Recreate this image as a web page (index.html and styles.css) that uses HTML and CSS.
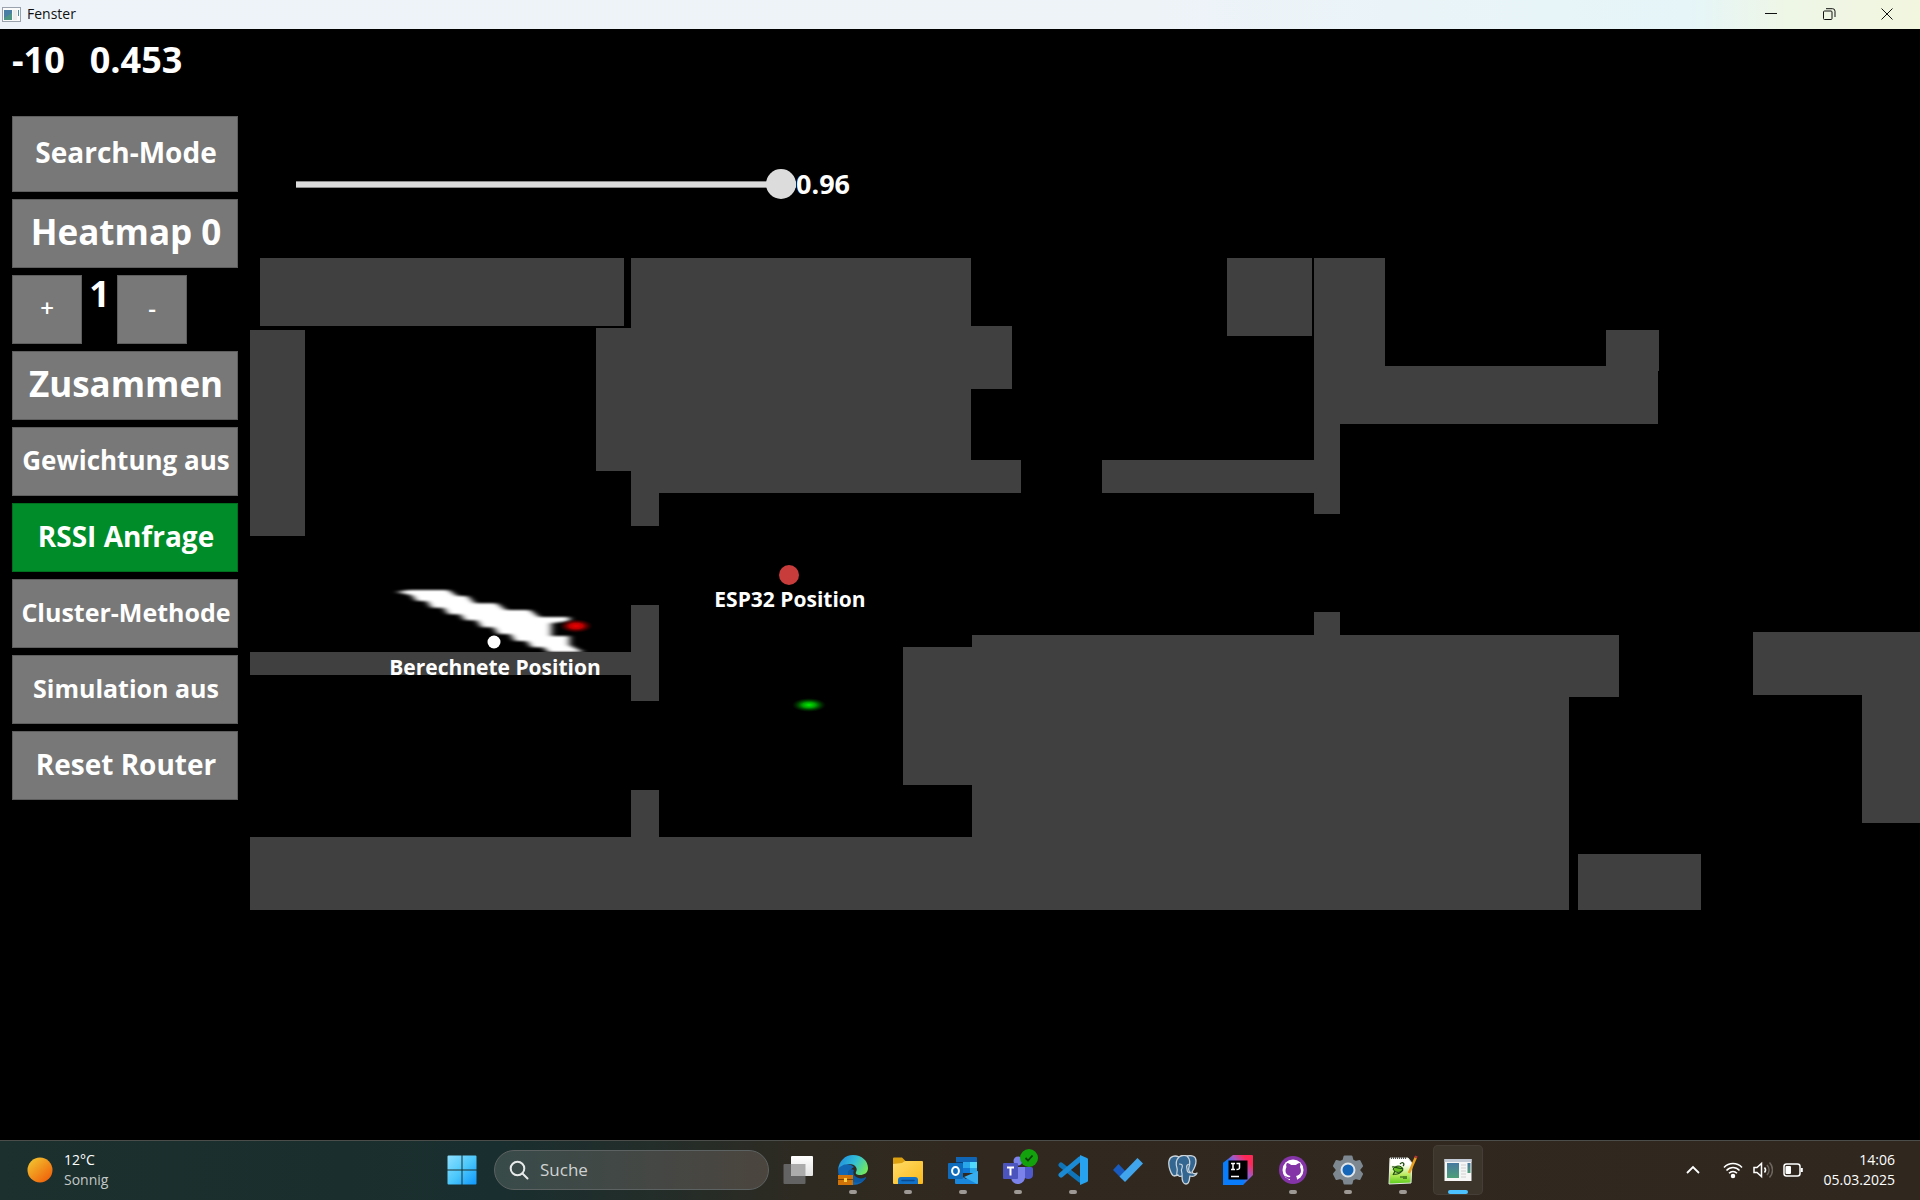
FILE: index.html
```html
<!DOCTYPE html>
<html lang="de">
<head>
<meta charset="utf-8">
<title>Fenster</title>
<link rel="stylesheet" href="styles.css">
</head>
<body>
<header class="titlebar">
  <svg class="titlebar-icon" viewBox="0 0 19 15" aria-hidden="true">
    <rect x=".5" y=".5" width="18" height="14" fill="#fafafa" stroke="#9aa3ad"/>
    <rect x="2" y="3" width="8" height="10" fill="#4d9484"/>
    <path d="M2 3h8v3l-8 5z" fill="#4a7fa5"/>
    <rect x="11" y="3" width="4" height="10" fill="#ececec"/>
    <rect x="16" y="3" width="1" height="6" fill="#4a90a8"/>
  </svg>
  <span class="titlebar-name">Fenster</span>
  <div class="titlebar-controls">
    <button type="button" aria-label="Minimieren"><svg viewBox="0 0 14 14"><path d="M1 6.500h12"/></svg></button>
    <button type="button" aria-label="Verkleinern"><svg viewBox="0 0 14 14"><rect x="1.500" y="4" width="8.500" height="8.500" rx="1"/><path d="M4 1.700h6.500a2.500 2.500 0 0 1 2.500 2.500V10"/></svg></button>
    <button type="button" aria-label="Schließen"><svg viewBox="0 0 14 14"><path d="M1.500 1.500l11 11M12.500 1.500l-11 11"/></svg></button>
  </div>
</header>

<main class="window">
  <aside class="sidebar">
    <div class="readout"><span>-10</span><span>0.453</span></div>
    <div class="controls">
      <button type="button" class="control control-tall size-m">Search-Mode</button>
      <button type="button" class="control size-l">Heatmap 0</button>
      <div class="stepper">
        <button type="button" class="control size-step">+</button>
        <output class="stepper-value">1</output>
        <button type="button" class="control size-step">-</button>
      </div>
      <button type="button" class="control size-l">Zusammen</button>
      <button type="button" class="control size-s">Gewichtung aus</button>
      <button type="button" class="control control-on size-m">RSSI Anfrage</button>
      <button type="button" class="control size-xs">Cluster-Methode</button>
      <button type="button" class="control size-xs">Simulation aus</button>
      <button type="button" class="control size-m">Reset Router</button>
    </div>
  </aside>

  <section class="stage">
    <div class="slider">
      <input type="range" id="factor" min="0" max="0.96" step="0.01" value="0.96" aria-label="Faktor">
      <output for="factor">0.96</output>
    </div>
    <svg class="map" viewBox="250 257 1670 654" role="img" aria-label="Grundriss">
      <defs>
        <filter id="soft" x="-10%" y="-20%" width="120%" height="140%"><feGaussianBlur stdDeviation="11 3"/></filter>
        <radialGradient id="glow-red"><stop offset="0" stop-color="#f00000"/><stop offset=".4" stop-color="#b80000"/><stop offset="1" stop-color="#500000" stop-opacity="0"/></radialGradient>
        <radialGradient id="glow-green"><stop offset="0" stop-color="#00f000"/><stop offset=".4" stop-color="#009800"/><stop offset="1" stop-color="#004000" stop-opacity="0"/></radialGradient>
      </defs>
      <g transform="translate(380 560) scale(.3333)">
        <path filter="url(#soft)" fill="#fff" d="M50 96L85 90H205L232 108H262L285 130H350L378 150H450L478 171H568V183L514 190V228H568V255L610 276H505L490 262H455L440 243H405L390 222H355L340 202H305L290 181H255L240 163H205L190 143H155L140 123H110L95 106Z"/>
      </g>
      <ellipse cx="576" cy="626" rx="17" ry="7" fill="url(#glow-red)"/>
      <ellipse cx="809" cy="705" rx="17" ry="7" fill="url(#glow-green)"/>
      <g class="walls">
        <path d="M260 258H624V326H260Z"/>
        <path d="M250 330H305V536H250Z"/>
        <path d="M631 258H971V326H1012V389H971V460H1021V493H659V526H631V471H596V328H631Z"/>
        <path d="M1227 258H1312V336H1227Z"/>
        <path d="M1314 258H1385V366H1606V330H1659V371H1658V424H1340V514H1314V493H1102V460H1314Z"/>
        <path d="M250 652H631V605H659V701H631V675H250Z"/>
        <path d="M250 837H631V790H659V837H972V785H903V647H972V635H1314V612H1340V635H1619V697H1569V910H250Z"/>
        <path d="M1578 854H1701V910H1578Z"/>
        <path d="M1753 632H1920V823H1862V695H1753Z"/>
      </g>
      <circle cx="494" cy="642" r="6.500" fill="#fff"/>
      <circle cx="789" cy="575" r="10" fill="#c83c3c"/>
      <text class="map-label" x="495" y="675">Berechnete Position</text>
      <text class="map-label" x="790" y="607">ESP32 Position</text>
    </svg>
  </section>
</main>

<footer class="taskbar">
  <button type="button" class="weather">
    <svg viewBox="0 0 26 26" aria-hidden="true"><defs><linearGradient id="sun" x1=".1" y1=".1" x2=".8" y2=".9"><stop stop-color="#f2c12e"/><stop offset="1" stop-color="#f0660c"/></linearGradient></defs><circle cx="13" cy="13" r="12.500" fill="url(#sun)"/></svg>
    <span class="two-lines"><span>12°C</span><span class="dim">Sonnig</span></span>
  </button>

  <nav class="dock">
    <button type="button" class="app" aria-label="Start">
      <svg viewBox="0 0 30 30"><defs><linearGradient id="win" x1="0" y1="0" x2="1" y2="1"><stop stop-color="#8fe0ff"/><stop offset=".5" stop-color="#4cc8fb"/><stop offset="1" stop-color="#0f97fb"/></linearGradient></defs><path fill="url(#win)" d="M1.500 .5H14.500V14.500H.5V1.500a1 1 0 0 1 1-1zM15.500 .5H28.500a1 1 0 0 1 1 1V14.500H15.500zM.5 15.500H14.500V29.500H1.500a1 1 0 0 1-1-1zM15.500 15.500H29.500V28.500a1 1 0 0 1-1 1H15.500z"/></svg>
    </button>
    <label class="search">
      <svg viewBox="0 0 20 20" aria-hidden="true"><circle cx="8.500" cy="8.500" r="6.800"/><path d="M13.500 13.500l5 5"/></svg>
      <input type="search" placeholder="Suche" aria-label="Suche">
    </label>
    <div class="apps">
      <button type="button" class="app" aria-label="Aktive Anwendungen">
        <svg viewBox="0 0 30 30"><defs><linearGradient id="tv" x1="0" y1="0" x2="0" y2="1"><stop stop-color="#fff"/><stop offset="1" stop-color="#e2e2e2"/></linearGradient></defs><rect x=".5" y="9" width="22" height="20" rx="1" fill="#636363"/><rect x="8" y="1" width="22" height="20" rx="1" fill="url(#tv)"/><path fill="#ababab" d="M8 9h14.500v12H9a1 1 0 0 1-1-1z"/></svg>
      </button>
      <button type="button" class="app is-open" aria-label="Edge">
        <svg viewBox="0 0 30 30"><defs><linearGradient id="edge" x1="0" y1=".3" x2="1" y2=".7"><stop stop-color="#1f8fe0"/><stop offset=".5" stop-color="#33bfd6"/><stop offset="1" stop-color="#74ea58"/></linearGradient></defs>
        <path fill="#1267b4" d="M0 15C2 8 11 7 16 12c-5 2-5 9 1 12 4 2 9 1 11-2-2 5-7 8-13 8C6 30 0 24 0 15z"/>
        <path fill="#0c59a4" d="M10 17c-1 7 6 14 15 9 2-1 3-3 3-4-3 2-8 2-11-1-2-2-2-4-1-6-3-2-6 0-6 2z"/>
        <path fill="url(#edge)" d="M0 15C1 6 7 0 15 0c9 0 15 6 15 13 0 5-4 7-8 7-3 0-5-1-4-3 2-3 0-8-7-8C5 9 1 12 0 15z"/>
        <rect y="20" width="15" height="10" fill="#cf7308"/><path d="M0 24.500h15" stroke="#7b3f00"/><rect x="6" y="23" width="3" height="4" fill="#ffd045"/></svg>
      </button>
      <button type="button" class="app is-open" aria-label="Explorer">
        <svg viewBox="0 0 30 30"><defs><linearGradient id="fold" x1="0" y1="0" x2="1" y2="1"><stop stop-color="#ffdc68"/><stop offset="1" stop-color="#fab91a"/></linearGradient></defs><path fill="#dda00f" d="M0 3.500a1 1 0 0 1 1-1h8l4 4V12H0z"/><path fill="url(#fold)" d="M0 9l9-1 3-2h17a1 1 0 0 1 1 1v21a1 1 0 0 1-1 1H1a1 1 0 0 1-1-1z"/><path fill="#1272c8" d="M5 29v-4a3 3 0 0 1 3-3h14a3 3 0 0 1 3 3v4z"/><path d="M9 25.500h12" stroke="#0a4a90" stroke-width="1.500" stroke-linecap="round"/></svg>
      </button>
      <button type="button" class="app is-open" aria-label="Outlook">
        <svg viewBox="0 0 30 30"><path fill="#1066b5" d="M8 2h20a1 1 0 0 1 1 1v14H8z"/><path fill="#28a8ea" d="M15 7h7v6h-7z"/><path fill="#50d9ff" d="M22 7h7v6h-7z"/><path fill="#0b3f78" d="M8 7h7v6H8z"/><path fill="#0f78d4" d="M15 13h7v5h-7z"/><path fill="#28a8ea" d="M22 13h7v5h-7z"/><path fill="#1a86dc" d="M7 17l11 7 12-8v12a1 1 0 0 1-1 1H8a1 1 0 0 1-1-1z"/><path fill="#36aef0" d="M30 16v12a1 1 0 0 1-1 1L16 22z"/><rect y="8" width="15" height="16" rx="1" fill="#0f6cbd"/><ellipse cx="7.500" cy="16" rx="3.400" ry="3.900" fill="none" stroke="#fff" stroke-width="2"/></svg>
      </button>
      <button type="button" class="app is-open" aria-label="Teams">
        <svg viewBox="0 0 30 30"><circle cx="15" cy="6" r="4.500" fill="#7b83eb"/><path fill="#5059c9" d="M20 12h8a2 2 0 0 1 2 2v6c0 4-5 5-8 3z"/><path fill="#7b83eb" d="M8 12h14v9a7 7 0 0 1-14 2z"/><rect y="8" width="15" height="16" rx="1" fill="#4b53bc"/><path d="M4 12.500h7M7.500 12.500v8" stroke="#fff" stroke-width="2"/></svg>
        <svg class="status" viewBox="0 0 18 18"><circle cx="9" cy="9" r="9" fill="#13a10e"/><path d="M5.500 9l2.500 2.500 4.500-5" fill="none" stroke="#0a3d08" stroke-width="1.800"/></svg>
      </button>
      <button type="button" class="app is-open" aria-label="Visual Studio Code">
        <svg viewBox="0 0 30 30"><path d="M3 10l19 15" stroke="#0f74b8" stroke-width="5" stroke-linecap="round"/><path d="M3 20L22 4" stroke="#1b8ad4" stroke-width="5" stroke-linecap="round"/><path fill="#27a2ee" d="M22 0l7 3a2 2 0 0 1 1 2v20a2 2 0 0 1-1 2l-7 3z"/><path fill="#30281f" d="M22 8.500v13L13.500 15z"/></svg>
      </button>
      <button type="button" class="app" aria-label="To Do">
        <svg viewBox="0 0 30 30"><path fill="#185abd" d="M0 15l5.500-6 9 9.500-5.500 5.500z"/><path fill="#41a5ee" d="M6.500 21.500L24.500 3 30 8.500 12 27z"/></svg>
      </button>
      <button type="button" class="app" aria-label="PostgreSQL">
        <svg viewBox="0 0 30 30"><path fill="#336791" stroke="#cdd5dc" stroke-width="1.300" stroke-linejoin="round" d="M1 6C2 1 7 0 11 2c3-2 6-2 8-1 5-1 9 0 9 5 0 4-2 8-4 11 1 2 3 2 5 1-1 3-4 4-7 3-1 3 0 8-4 8-3 0-4-3-4-8-2 1-4 0-4-1l-4 1C3 20 0 11 1 6z"/><path fill="none" stroke="#cdd5dc" stroke-width="1.200" d="M11 2C7 6 8 10 9 13c1 3-1 5 0 8M14 21c1-3-2-5 0-8 1-3 0-4-3-4M19 1c4 4 3 8 2 11s0 4 2 6c-2 0-4-1-4-4-1-3 0-5 3-5"/></svg>
      </button>
      <button type="button" class="app" aria-label="IntelliJ IDEA">
        <svg viewBox="0 0 30 30"><defs><linearGradient id="ij" x1=".1" y1=".8" x2=".9" y2=".1"><stop offset=".3" stop-color="#087cfa"/><stop offset=".62" stop-color="#a059c8"/><stop offset=".9" stop-color="#fe2857"/></linearGradient></defs><path fill="url(#ij)" d="M10 0h19a1 1 0 0 1 1 1v19L20 30H1a1 1 0 0 1-1-1V8z"/><path fill="#087cfa" d="M0 8l6-4v20h16l-2 6H0z"/><rect x="5.500" y="5.500" width="19" height="19"/><path fill="none" stroke="#fff" stroke-width="1.500" d="M8 8.500h4M10 8.500v6M8 14.500h4M13.500 8.500h3v4c0 2-1 2-3 2M8 21.500h8"/></svg>
      </button>
      <button type="button" class="app is-open" aria-label="GitHub Desktop">
        <svg viewBox="0 0 30 30"><circle cx="15" cy="15" r="14" fill="#8534a8"/><circle cx="15" cy="15" r="10.500" fill="#fff"/><path fill="#8534a8" d="M9 8c2 0 3 1 4 2h5c1-1 2-2 4-2 .500 1.500.500 2.500 0 4 2 4 1 8-4 9 1 1 1 3 1 5h-7v-2c-3 .500-4-2-5.500-3 2-.5 3 2 5.500 1 0-.5.200-.7.500-1-5-1-6-5-4-9-.5-1.500-.5-2.500.5-4z"/></svg>
      </button>
      <button type="button" class="app is-open" aria-label="Einstellungen">
        <svg viewBox="0 0 30 30"><path fill="#7e8891" stroke="#7e8891" stroke-width="2" stroke-linejoin="round" d="M11.500 1.500h7l1 4 3 1.500 4-1 2.500 5-2.500 3v2l2.500 3-2.500 5-4-1-3 1.500-1 4h-7l-1-4-3-1.500-4 1-2.500-5 2.500-3v-2l-2.500-3 2.500-5 4 1 3-1.500z"/><circle cx="15" cy="15" r="6.500" fill="#1565b8" stroke="#dfe4e8" stroke-width="2"/></svg>
      </button>
      <button type="button" class="app is-open" aria-label="Notepad++">
        <svg viewBox="0 0 30 30"><defs><linearGradient id="npp" x1="0" y1="0" x2="0" y2="1"><stop offset=".25" stop-color="#fff"/><stop offset=".65" stop-color="#b8ea5c"/><stop offset="1" stop-color="#58cc1a"/></linearGradient></defs><path fill="url(#npp)" stroke="#e5e9e0" d="M2 3h18l4 5-1 20-22 1z"/><path stroke="#555" stroke-dasharray="1 1" stroke-width="2" d="M3 3h16"/><path fill="#69bf25" stroke="#1c4a10" d="M5 14c3-4 8-4 10 0-1 4-8 5-10 0z"/><path fill="none" stroke="#1c4a10" stroke-width="1.200" d="M4 12c4-1 7 3 11 1M6 19c3 1 7-1 9-4M7 16l-2 4M12 9c3-3 5 0 3 2M12 22h3M16 21v3M18 21v3"/><path stroke="#e9a01c" stroke-width="2.500" d="M28 2l-7 16"/><path stroke="#b33" stroke-width="2.500" d="M28.500 1l-1 2"/></svg>
      </button>
      <button type="button" class="app is-active" aria-label="Fenster">
        <svg viewBox="0 0 30 30"><defs><linearGradient id="pane" x1="0" y1="0" x2="0" y2="1"><stop stop-color="#4779a0"/><stop offset="1" stop-color="#4d9e78"/></linearGradient></defs><rect x="1.500" y="4" width="27" height="22" fill="#f6f6f6"/><path fill="#c3cbd6" d="M1.500 4h27v3h-27z"/><rect x="4" y="8" width="12" height="15" fill="url(#pane)"/><path stroke="#d0d0d0" d="M18 10h5M18 13h5M18 16h5M18 19h5M18 22h5"/><rect x="24.500" y="8" width="3" height="10" fill="url(#pane)"/></svg>
      </button>
    </div>
  </nav>

  <div class="tray">
    <button type="button" class="tray-icon tray-more" aria-label="Ausgeblendete Symbole"><svg viewBox="0 0 20 20"><path d="M4 13l6-6 6 6" stroke-width="1.800"/></svg></button>
    <button type="button" class="tray-icon" aria-label="WLAN"><svg viewBox="0 0 20 20"><path d="M1 7.500c5-5.300 13-5.300 18 0M3.500 10.500c3.700-4 9.300-4 13 0M6 13.300c2.300-2.500 5.700-2.500 8 0"/><circle cx="10" cy="16" r="1.500" fill="#fff"/></svg></button>
    <button type="button" class="tray-icon" aria-label="Lautstärke"><svg viewBox="0 0 20 20"><path d="M1 7.500h3l4.500-4v13l-4.500-4H1zM11.500 7.500c1.300 1.500 1.300 3.500 0 5"/><path d="M14 5c2.700 3 2.700 7 0 10M16.500 2.500c4 4.500 4 10.500 0 15" stroke="#6d665f"/></svg></button>
    <button type="button" class="tray-icon" aria-label="Akku"><svg viewBox="0 0 20 20"><rect x="1" y="4" width="16" height="12" rx="2.500"/><rect x="2.500" y="6" width="5.500" height="8" rx="1" fill="#fff" stroke="none"/><path d="M18.800 8v4" stroke-width="2"/></svg></button>
    <button type="button" class="clock two-lines"><span>14:06</span><span>05.03.2025</span></button>
  </div>
</footer>
</body>
</html>
```
FILE: styles.css
```css
* { box-sizing: border-box; }

body {
  margin: 0;
  min-height: 100vh;
  display: flex;
  flex-direction: column;
  background: #000;
  color: #fff;
  font-family: "Open Sans", "Noto Sans", sans-serif;
}

button, input {
  font-family: inherit;
  color: inherit;
}

button {
  margin: 0;
  padding: 0;
  border: 0;
  background: none;
}

svg { display: block; }

/* Title bar */
.titlebar {
  display: flex;
  align-items: center;
  height: 29px;
  padding: 0 4px 1px 2px;
  background: linear-gradient(90deg, #eef3f9 0%, #eef3f8 60%, #e5f5f8 88%, #eef6e6 93%, #f2f6df 100%);
  color: #111;
}

.titlebar-icon { width: 19px; height: 15px; }

.titlebar-name {
  margin-left: 6px;
  font-size: 14px;
  line-height: 20px;
}

.titlebar-controls {
  display: flex;
  margin-left: auto;
}

.titlebar-controls button {
  display: grid;
  place-items: center;
  width: 58px;
  height: 28px;
}

.titlebar-controls svg {
  width: 14px;
  height: 14px;
  fill: none;
  stroke: #111;
}

/* Application window */
.window {
  flex: 1;
  display: grid;
  grid-template-columns: 238px 1fr;
  column-gap: 12px;
}

.sidebar { padding: 6px 0 0 12px; }

.readout {
  display: flex;
  gap: 25px;
  margin-bottom: 31px;
  font-size: 36px;
  font-weight: 700;
  line-height: 50px;
}

.controls {
  display: flex;
  flex-direction: column;
  gap: 7px;
}

.control {
  height: 69px;
  padding: 0 0 4px 2px;
  border: 1px solid #5e5e5e;
  background: #787878;
  font-weight: 700;
  white-space: nowrap;
}

.control-tall { height: 76px; }

.control-on {
  border-color: #00701f;
  background: #008c28;
}

.size-l { font-size: 35px; }
.size-m { font-size: 28px; }
.size-s { font-size: 26px; }
.size-xs { font-size: 25px; }

.size-step {
  padding: 0 0 4px;
  font-size: 24px;
  font-weight: 600;
}

.stepper {
  display: grid;
  grid-template-columns: 70px 35px 70px;
}

.stepper-value {
  font-size: 36px;
  font-weight: 700;
  line-height: 38px;
  text-align: center;
}

.stage { padding-top: 140px; }

.slider {
  display: flex;
  align-items: center;
  height: 30px;
  margin: 0 0 58px 46px;
  font-size: 27px;
  font-weight: 700;
  line-height: 30px;
}

.slider input {
  appearance: none;
  width: 500px;
  height: 30px;
  margin: 0;
  background: none;
}

.slider input::-webkit-slider-runnable-track {
  height: 7px;
  border: solid #8c8c8c;
  border-width: 1px 0;
  background: #dcdcdc;
}

.slider input::-webkit-slider-thumb {
  appearance: none;
  width: 30px;
  height: 30px;
  margin-top: -13px;
  border-radius: 50%;
  background: #dcdcdc;
}

.map {
  width: 100%;
  height: auto;
}

.walls {
  fill: #404040;
}

.map-label {
  fill: #fff;
  font-size: 21px;
  font-weight: 700;
  text-anchor: middle;
}

/* Taskbar */
.taskbar {
  display: grid;
  grid-template-columns: 1fr auto 1fr;
  align-items: center;
  height: 60px;
  padding-bottom: 2px;
  border-top: 1px solid #4b4d4a;
  background: linear-gradient(90deg, #1c302e 0%, #1a2f2d 18%, #192e2f 26%, #232d29 34%, #2e2a21 42%, #31291f 50%, #30281f 100%);
}

.two-lines {
  display: flex;
  flex-direction: column;
  font-size: 14px;
  line-height: 20px;
}

.weather {
  display: flex;
  align-items: center;
  gap: 11px;
  padding-left: 27px;
  text-align: left;
}

.weather svg { width: 26px; height: 26px; }

.dim { color: #c3c8c7; }

.dock {
  display: flex;
  align-items: center;
}

.apps {
  display: flex;
  gap: 5px;
}

.app {
  position: relative;
  display: grid;
  place-items: center;
  width: 50px;
  height: 50px;
  border-radius: 5px;
}

.app > svg { width: 30px; height: 30px; }

.app > .status {
  position: absolute;
  top: 4px;
  right: 5px;
  width: 18px;
  height: 18px;
}

.is-open::after,
.is-active::after {
  content: "";
  position: absolute;
  bottom: 1px;
  left: 21px;
  width: 8px;
  height: 4px;
  border-radius: 2px;
  background: #9e9994;
}

.is-active {
  background: #3c352c;
  box-shadow: inset 0 0 0 1px #453e36;
}

.is-active::after {
  left: 15px;
  width: 20px;
  background: #4cc2ff;
}

.search {
  display: flex;
  align-items: center;
  gap: 11px;
  width: 275px;
  height: 40px;
  margin: 0 4px 0 7px;
  padding: 0 16px 0 14px;
  border: 1px solid #5c6261;
  border-radius: 20px;
  background: linear-gradient(90deg, #384b49, #454744 60%, #4b453e);
}

.search svg {
  width: 20px;
  height: 20px;
  fill: none;
  stroke: #e8eaea;
  stroke-width: 2;
  stroke-linecap: round;
}

.search input {
  flex: 1;
  min-width: 0;
  padding: 0;
  border: 0;
  background: none;
  font-size: 17px;
}

.search input::placeholder { color: #cfd2d1; }

.tray {
  display: flex;
  align-items: center;
  justify-content: flex-end;
  gap: 10px;
  padding-right: 25px;
}

.tray-icon svg {
  width: 20px;
  height: 20px;
  fill: none;
  stroke: #fff;
  stroke-width: 1.5;
}

.tray-more { margin-right: 10px; }

.clock {
  align-items: flex-end;
  margin-left: 11px;
}
```
